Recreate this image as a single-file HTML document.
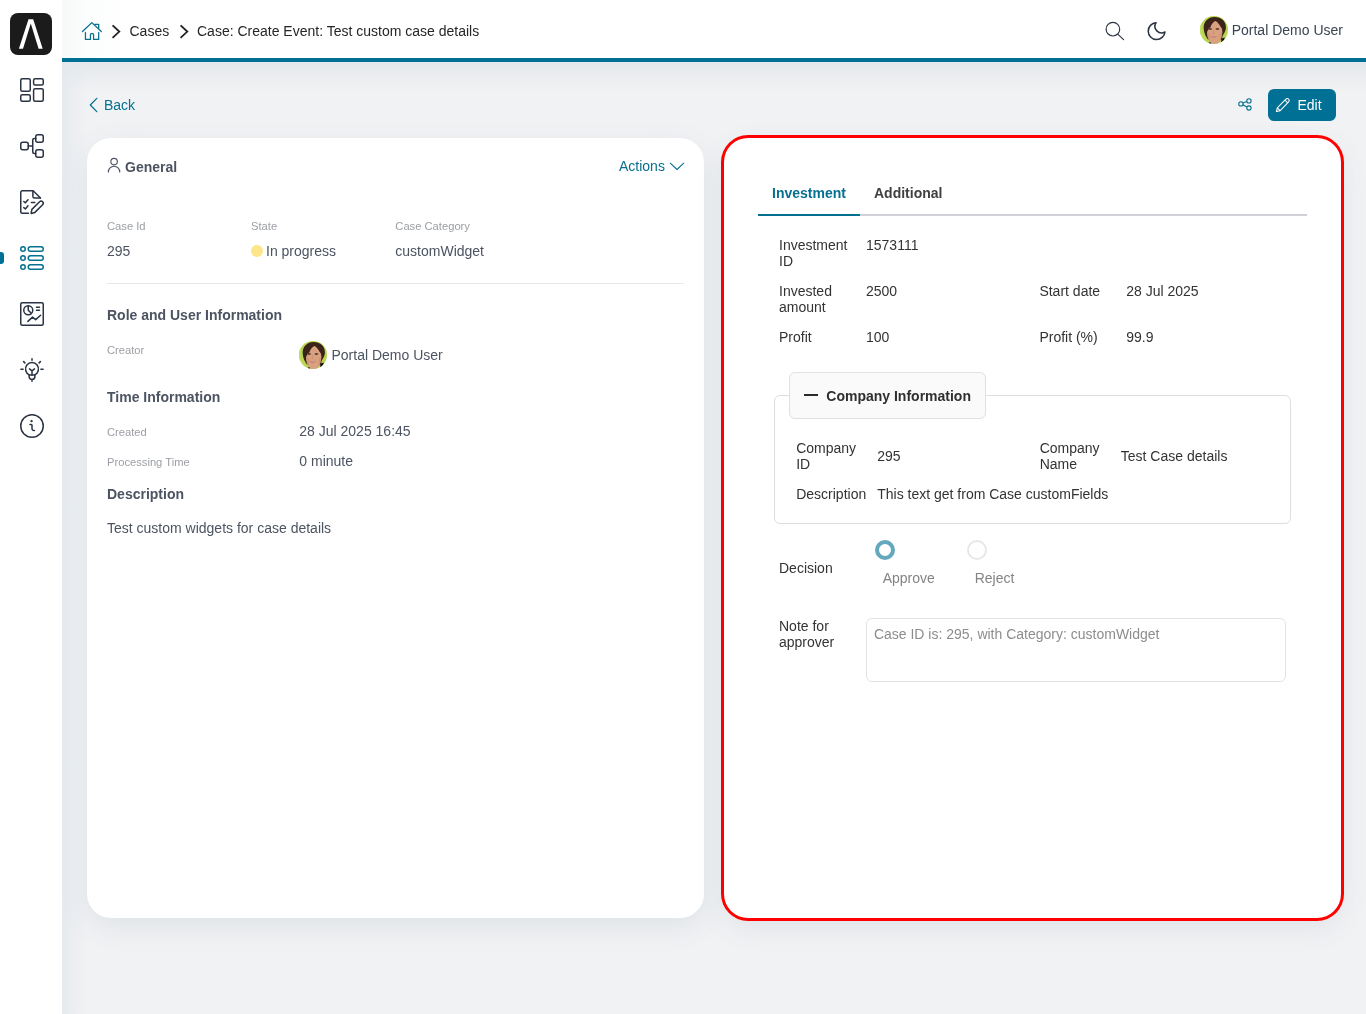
<!DOCTYPE html>
<html lang="en">
<head>
<meta charset="utf-8">
<title>Case: Create Event: Test custom case details</title>
<style>
*{box-sizing:border-box;margin:0;padding:0}
html,body{width:1366px;height:1014px;overflow:hidden}
body{font-family:"Liberation Sans",sans-serif;font-size:14px;color:#4c5361;background:#f1f2f4;position:relative}
.abs{position:absolute}
.t{position:absolute;white-space:nowrap;line-height:16px}
svg{display:block;overflow:visible}
/* layout */
#main{position:absolute;left:62px;top:62px;width:1304px;height:952px;background:#f1f2f4;overflow:hidden}
#sidebar{position:absolute;left:0;top:0;width:62px;height:1014px;background:#fff}
#topbar{position:absolute;left:62px;top:0;width:1304px;height:58px;background:linear-gradient(to right,#f7f8f8 0,#fcfdfd 26px,#fff 70px)}
#blueline{position:absolute;left:62px;top:58px;width:1304px;height:4px;background:#007095}
.card{position:absolute;background:#fff;border-radius:24px}
.lbl{font-size:11.2px;color:#9b9ea4}
.val{color:#4c5361}
.b{font-weight:700}
.blue{color:#05708f}
.dk{color:#333}
</style>
</head>
<body>
<div id="root" style="position:absolute;left:0;top:0;width:1366px;height:1014px;will-change:transform">
<div id="main">

  <div class="abs" style="left:0;top:0;width:1304px;height:30px;background:linear-gradient(to bottom,rgba(228,231,234,.95),rgba(228,231,234,0))"></div>
  <div class="abs" style="left:0;top:0;width:26px;height:952px;background:linear-gradient(to right,rgba(227,233,237,.92),rgba(229,234,238,.5) 10px,rgba(232,236,239,0))"></div>

  <div class="card" id="lcard" style="left:25px;top:76px;width:617px;height:780px;box-shadow:0 9px 30px rgba(58,92,115,.098)"></div>
  <div class="card" id="rcard" style="left:662px;top:76px;width:617px;height:780px;box-shadow:0 0 0 3px #f00,0 9px 30px rgba(58,92,115,.098)"></div>
</div>
<div id="sidebar">

  <div class="abs" style="left:10px;top:13px;width:42px;height:42px;border-radius:8px;background:#1b1b1b">
    <svg width="42" height="42" viewBox="0 0 42 42"><path d="M8.9 35.7L18.5 6.3h4.7L32.7 35.7h-4.1L20.8 10.6 13 35.7z" fill="#fff"/></svg>
  </div>
  <div class="abs" style="left:0;top:252px;width:4px;height:12px;background:#007095;border-radius:0 3px 3px 0"></div>
  <!-- dashboard -->
  <svg class="abs" style="left:20px;top:78px" width="24" height="24" viewBox="0 0 24 24" fill="none" stroke="#2a3342" stroke-width="1.5" stroke-linejoin="round">
    <rect x=".75" y=".75" width="9.5" height="12.4" rx="1.5"/><rect x="13.6" y=".75" width="9.65" height="6.3" rx="1.5"/>
    <rect x=".75" y="16.75" width="9.5" height="6.5" rx="1.5"/><rect x="13.6" y="10.75" width="9.65" height="12.5" rx="1.5"/>
  </svg>
  <!-- hierarchy -->
  <svg class="abs" style="left:20px;top:134px" width="24" height="24" viewBox="0 0 24 24" fill="none" stroke="#2a3342" stroke-width="1.5" stroke-linecap="round" stroke-linejoin="round">
    <rect x=".75" y="8.25" width="7.5" height="7.5" rx="2"/><rect x="15.75" y=".75" width="7.5" height="7.5" rx="2"/><rect x="15.75" y="15.75" width="7.5" height="7.5" rx="2"/>
    <path d="M8.25 12h4.5M15.75 4.5h-1.5a1.5 1.5 0 0 0-1.5 1.5v12a1.5 1.5 0 0 0 1.5 1.5h1.5"/>
  </svg>
  <!-- task list pen -->
  <svg class="abs" style="left:20px;top:190px" width="24" height="24" viewBox="0 0 24 24" fill="none" stroke="#2a3342" stroke-width="1.5" stroke-linecap="round" stroke-linejoin="round">
    <path d="M8.4 23.25H2.25a1.5 1.5 0 0 1-1.5-1.5V2.25a1.5 1.5 0 0 1 1.5-1.5h10.9l7.3 7.3"/>
    <path d="M12.9 .9v5.6a1.5 1.5 0 0 0 1.5 1.5h6"/>
    <path d="M3.8 11.5l1.6 1.3 2.6-3.1M3.8 17.6l1.6 1.3 2.6-3.1M11.4 12.5h3.4"/>
    <path d="M11.1 23.4l.8-4 7.7-7.7a2.1 2.1 0 0 1 3 3l-7.7 7.7z"/>
  </svg>
  <!-- list (active) -->
  <svg class="abs" style="left:20px;top:246px" width="24" height="24" viewBox="0 0 24 24" fill="none" stroke="#05708f" stroke-width="1.5">
    <circle cx="3" cy="3" r="2.25"/><circle cx="3" cy="12" r="2.25"/><circle cx="3" cy="21" r="2.25"/>
    <rect x="8.25" y=".75" width="15" height="4.5" rx="2.25"/><rect x="8.25" y="9.75" width="15" height="4.5" rx="2.25"/><rect x="8.25" y="18.75" width="15" height="4.5" rx="2.25"/>
  </svg>
  <!-- statistics -->
  <svg class="abs" style="left:20px;top:302px" width="24" height="24" viewBox="0 0 24 24" fill="none" stroke="#2a3342" stroke-width="1.5" stroke-linecap="round" stroke-linejoin="round">
    <rect x=".75" y=".75" width="22.5" height="22.5" rx="1.5"/>
    <circle cx="8.25" cy="8.2" r="4.5"/><path d="M8.25 3.75v4.4l3.1 3.2M16.5 5.25h3M16.5 8.25h3M7.9 19.4l4.6-4.3 3.2 2.5 4.9-4.3"/>
  </svg>
  <!-- bulb -->
  <svg class="abs" style="left:20px;top:358px" width="24" height="24" viewBox="0 0 24 24" fill="none" stroke="#2a3342" stroke-width="1.5" stroke-linecap="round" stroke-linejoin="round">
    <path d="M9.3 16.9A6.5 6.5 0 1 1 14.7 16.9"/><path d="M9.1 17h5.8M9.1 17v1.6a2.9 2.9 0 0 0 5.8 0V17M12 21.9v1.35"/>
    <path d="M12 .75v1.5M3.6 3.6l1.3 1.3M20.4 3.6l-1.3 1.3M.9 11.25h2.2M20.9 11.25h2.2M9.5 10.9l2.5 2 2.5-2M12 12.9V17"/>
  </svg>
  <!-- info -->
  <svg class="abs" style="left:20px;top:414px" width="24" height="24" viewBox="0 0 24 24" fill="none" stroke="#2a3342" stroke-width="1.5" stroke-linecap="round" stroke-linejoin="round">
    <circle cx="12" cy="12" r="11.25"/><path d="M14.4 16.5h-.75a1.65 1.65 0 0 1-1.65-1.65v-3.6a.75.75 0 0 0-.75-.75h-1.3"/><circle cx="11.4" cy="7.1" r=".7" fill="#2a3342" stroke-width="1"/>
  </svg>

</div>
<div id="topbar"></div>
<div id="blueline"></div>


<!-- home -->
<svg class="abs" style="left:82px;top:22px" width="20" height="18" viewBox="0 0 20 18" fill="none" stroke="#05708f" stroke-width="1.25" stroke-linecap="round" stroke-linejoin="round">
  <path d="M.5 9.5L9.8.6l9.5 8.9"/><path d="M12.7 2.3h4v3.9"/>
  <path d="M3.45 10.4v7h5v-4.8a1 1 0 0 1 1-1h1.1a1 1 0 0 1 1 1v4.8h5.15v-7"/>
</svg>
<svg class="abs" style="left:112px;top:25px" width="9" height="13" viewBox="0 0 9 13" fill="none" stroke="#222" stroke-width="1.8" stroke-linecap="square" stroke-linejoin="miter"><path d="M1.2 .9l6.1 5.7-6.1 5.7"/></svg>
<div class="t" style="left:129.5px;top:23px;color:#262626">Cases</div>
<svg class="abs" style="left:179.7px;top:25px" width="9" height="13" viewBox="0 0 9 13" fill="none" stroke="#222" stroke-width="1.8" stroke-linecap="square" stroke-linejoin="miter"><path d="M1.2 .9l6.1 5.7-6.1 5.7"/></svg>
<div class="t" style="left:197px;top:23px;color:#262626">Case: Create Event: Test custom case details</div>
<!-- search -->
<svg class="abs" style="left:1104px;top:20px" width="22" height="22" viewBox="0 0 22 22" fill="none" stroke="#2a3342" stroke-width="1.15" stroke-linecap="round"><circle cx="8.9" cy="9.2" r="6.8"/><path d="M13.7 14.2l5.9 5.4"/></svg>
<!-- moon -->
<svg class="abs" style="left:1147.5px;top:22px" width="18" height="18" viewBox="0 0 18 18" fill="none" stroke="#2a3342" stroke-width="1.5" stroke-linejoin="round"><path d="M8.1.7A8.4 8.4 0 1 0 17 9.9 6.55 6.55 0 0 1 8.1.7z"/></svg>
<div class="abs" style="left:1200px;top:16px;width:28px;height:28px;border-radius:50%;overflow:hidden"><svg width="28" height="28" viewBox="0 0 28 28" style="overflow:hidden">
        <rect width="28" height="28" fill="#b7d550"/>
        <path d="M2 7 Q0.5 16 5.5 25 L9 28 L0 28 L0 7 Z" fill="#c2dc62"/>
        <path d="M3.7 12.5 C3.2 6 8 1.1 14.5 1.1 C21.5 1.1 26.3 5.8 25.9 11.8 C25.7 15 24.2 17.5 22.8 19.5 L21.5 24 L8 23.5 C5.5 20.5 4 16.5 3.7 12.5 Z" fill="#3b2419"/>
        <path d="M7 15.5 C7 9 10.5 5 14.8 5 C19.3 5 22.3 9.5 22.3 15.5 C22.3 22 19.3 29 14.6 29 C10 29 7 22 7 15.5 Z" fill="#d9a17f"/>
        <path d="M7 15.5 C7 19 8 23 10 26 L10 18 Z" fill="#cc9170" opacity=".7"/>
        <path d="M22.3 15.5 C22.3 19 21.3 23 19.5 26 L19.8 18 Z" fill="#cc9170" opacity=".7"/>
        <path d="M15.9 4.6 C12.6 6.4 11 9 10.5 11.3 C9.2 12 8 13.6 7.3 15.8 L4.5 14 L5.5 6 L12 2.5 Z" fill="#3b2419"/>
        <path d="M15.1 4.6 C17.6 6.2 19.6 8.8 20.4 10.5 C21.3 11.3 22 12.5 22.5 14.2 L25.5 13 L23.5 5 L17 2.5 Z" fill="#3b2419"/>
        <ellipse cx="10.1" cy="13" rx="1.9" ry="1" fill="#5e4436"/>
        <ellipse cx="17.4" cy="13" rx="1.9" ry="1" fill="#5e4436"/>
        <path d="M13.6 14 L13.1 17.6 L14.6 17.9" fill="none" stroke="#c58c6c" stroke-width=".7"/>
        <path d="M10.8 20.4 Q13.5 23.6 16.4 20.4 Q13.5 21.2 10.8 20.4 Z" fill="#d9a3a0" stroke="#c77c74" stroke-width=".7"/>
        <path d="M21.6 22.6 L24.8 21.6 L24 25 L21 27 Z" fill="#101010"/>
        <path d="M8.8 26.6 L10.6 26 L11 28 L8.5 28 Z" fill="#2a2f45"/>
</svg></div>
<div class="t" style="left:1231.7px;top:22px;color:#3b4453">Portal Demo User</div>


<svg class="abs" style="left:89px;top:97px" width="9" height="16" viewBox="0 0 9 16" fill="none" stroke="#05708f" stroke-width="1.2" stroke-linecap="round" stroke-linejoin="round"><path d="M7.8 1.3L1.3 8l6.5 6.7"/></svg>
<div class="t blue" style="left:104px;top:97px">Back</div>
<!-- share -->
<svg class="abs" style="left:1238px;top:98.3px" width="15" height="14" viewBox="0 0 15 14" fill="none" stroke="#05708f" stroke-width="1.1"><circle cx="2.9" cy="5.9" r="2.15"/><circle cx="10.95" cy="2.9" r="2.15"/><circle cx="10.95" cy="10" r="2.15"/><path d="M4.9 5.1l4-1.5M4.9 6.8l4 2.3"/></svg>
<div class="abs" style="left:1268px;top:89px;width:68px;height:32px;border-radius:6px;background:#007095"></div>
<svg class="abs" style="left:1276px;top:98px" width="14" height="14" viewBox="0 0 14 14" fill="none" stroke="#fff" stroke-width="1.05" stroke-linecap="round" stroke-linejoin="round"><path d="M.4 13.6l.9-3.8L9.9 1.2a1.9 1.9 0 0 1 2.7 2.7L4.2 12.7zM1.3 9.8l2.9 2.9M9 2.1l2.7 2.7"/></svg>
<div class="t" style="left:1297.5px;top:97px;color:#fff">Edit</div>


<svg class="abs" style="left:107px;top:157px" width="14" height="16" viewBox="0 0 14 16" fill="none" stroke="#4c5361" stroke-width="1.15" stroke-linecap="round"><circle cx="7.1" cy="4.6" r="3.25"/><path d="M1.35 14.9a5.7 5.7 0 0 1 11.4 0"/></svg>
<div class="t b val" style="left:125px;top:159px">General</div>
<div class="t blue" style="left:619px;top:158px">Actions</div>
<svg class="abs" style="left:669px;top:162px" width="16" height="9" viewBox="0 0 16 9" fill="none" stroke="#05708f" stroke-width="1.05" stroke-linecap="round" stroke-linejoin="round"><path d="M1.3 1.2L8 7.5l6.7-6.3"/></svg>
<div class="t lbl" style="left:107px;top:218px">Case Id</div>
<div class="t lbl" style="left:251px;top:218px">State</div>
<div class="t lbl" style="left:395.3px;top:218px">Case Category</div>
<div class="t val" style="left:107px;top:243px">295</div>
<div class="abs" style="left:251px;top:245px;width:12px;height:12px;border-radius:50%;background:#fde58a"></div>
<div class="t val" style="left:266px;top:243px">In progress</div>
<div class="t val" style="left:395.3px;top:243px">customWidget</div>
<div class="abs" style="left:107px;top:283px;width:577px;height:1px;background:#e8e9eb"></div>
<div class="t b val" style="left:107px;top:307px">Role and User Information</div>
<div class="t lbl" style="left:107px;top:342px">Creator</div>
<div class="abs" style="left:299px;top:341px;width:28px;height:28px;border-radius:50%;overflow:hidden"><svg width="28" height="28" viewBox="0 0 28 28" style="overflow:hidden">
        <rect width="28" height="28" fill="#b7d550"/>
        <path d="M2 7 Q0.5 16 5.5 25 L9 28 L0 28 L0 7 Z" fill="#c2dc62"/>
        <path d="M3.7 12.5 C3.2 6 8 1.1 14.5 1.1 C21.5 1.1 26.3 5.8 25.9 11.8 C25.7 15 24.2 17.5 22.8 19.5 L21.5 24 L8 23.5 C5.5 20.5 4 16.5 3.7 12.5 Z" fill="#3b2419"/>
        <path d="M7 15.5 C7 9 10.5 5 14.8 5 C19.3 5 22.3 9.5 22.3 15.5 C22.3 22 19.3 29 14.6 29 C10 29 7 22 7 15.5 Z" fill="#d9a17f"/>
        <path d="M7 15.5 C7 19 8 23 10 26 L10 18 Z" fill="#cc9170" opacity=".7"/>
        <path d="M22.3 15.5 C22.3 19 21.3 23 19.5 26 L19.8 18 Z" fill="#cc9170" opacity=".7"/>
        <path d="M15.9 4.6 C12.6 6.4 11 9 10.5 11.3 C9.2 12 8 13.6 7.3 15.8 L4.5 14 L5.5 6 L12 2.5 Z" fill="#3b2419"/>
        <path d="M15.1 4.6 C17.6 6.2 19.6 8.8 20.4 10.5 C21.3 11.3 22 12.5 22.5 14.2 L25.5 13 L23.5 5 L17 2.5 Z" fill="#3b2419"/>
        <ellipse cx="10.1" cy="13" rx="1.9" ry="1" fill="#5e4436"/>
        <ellipse cx="17.4" cy="13" rx="1.9" ry="1" fill="#5e4436"/>
        <path d="M13.6 14 L13.1 17.6 L14.6 17.9" fill="none" stroke="#c58c6c" stroke-width=".7"/>
        <path d="M10.8 20.4 Q13.5 23.6 16.4 20.4 Q13.5 21.2 10.8 20.4 Z" fill="#d9a3a0" stroke="#c77c74" stroke-width=".7"/>
        <path d="M21.6 22.6 L24.8 21.6 L24 25 L21 27 Z" fill="#101010"/>
        <path d="M8.8 26.6 L10.6 26 L11 28 L8.5 28 Z" fill="#2a2f45"/>
</svg></div>
<div class="t val" style="left:331.5px;top:347px">Portal Demo User</div>
<div class="t b val" style="left:107px;top:389px">Time Information</div>
<div class="t lbl" style="left:107px;top:424px">Created</div>
<div class="t val" style="left:299.3px;top:423px">28 Jul 2025 16:45</div>
<div class="t lbl" style="left:107px;top:454px">Processing Time</div>
<div class="t val" style="left:299.3px;top:453px">0 minute</div>
<div class="t b val" style="left:107px;top:486px">Description</div>
<div class="t val" style="left:107px;top:520px">Test custom widgets for case details</div>


<div class="t b blue" style="left:772px;top:185px">Investment</div>
<div class="t b" style="left:874px;top:185px;color:#404040">Additional</div>
<div class="abs" style="left:758px;top:214px;width:549px;height:2px;background:#d0d2d7"></div>
<div class="abs" style="left:758px;top:214px;width:102px;height:2px;background:#05708f"></div>
<div class="t dk" style="left:779px;top:237px">Investment<br>ID</div>
<div class="t dk" style="left:866px;top:237px">1573111</div>
<div class="t dk" style="left:779px;top:283px">Invested<br>amount</div>
<div class="t dk" style="left:866px;top:283px">2500</div>
<div class="t dk" style="left:1039.4px;top:283px">Start date</div>
<div class="t dk" style="left:1126.2px;top:283px">28 Jul 2025</div>
<div class="t dk" style="left:779px;top:329px">Profit</div>
<div class="t dk" style="left:866px;top:329px">100</div>
<div class="t dk" style="left:1039.4px;top:329px">Profit (%)</div>
<div class="t dk" style="left:1126.2px;top:329px">99.9</div>
<!-- fieldset -->
<div class="abs" style="left:774px;top:395px;width:517px;height:129px;border:1px solid #dcdee2;border-radius:6px"></div>
<div class="abs" style="left:789px;top:372px;width:197px;height:47px;border:1px solid #dfe1e5;border-radius:6px;background:#fafafa"></div>
<div class="abs" style="left:804px;top:394.25px;width:14px;height:1.3px;background:#2b2b2b"></div>
<div class="t b" style="left:826.3px;top:388px;color:#2f2f2f">Company Information</div>
<div class="t dk" style="left:796.2px;top:440px">Company<br>ID</div>
<div class="t dk" style="left:877.2px;top:448px">295</div>
<div class="t dk" style="left:1039.7px;top:440px">Company<br>Name</div>
<div class="t dk" style="left:1120.8px;top:448px">Test Case details</div>
<div class="t dk" style="left:796.2px;top:486px">Description</div>
<div class="t dk" style="left:877.2px;top:486px">This text get from Case customFields</div>
<!-- decision -->
<div class="t dk" style="left:779px;top:560px">Decision</div>
<div class="abs" style="left:875px;top:540px;width:20px;height:20px;border-radius:50%;border:4px solid #64a8be;background:#fff"></div>
<div class="t" style="left:882.7px;top:570px;color:#848484">Approve</div>
<div class="abs" style="left:967px;top:540px;width:20px;height:20px;border-radius:50%;border:2px solid #e5e7e9;background:#fff"></div>
<div class="t" style="left:974.7px;top:570px;color:#848484">Reject</div>
<div class="t dk" style="left:779px;top:618px">Note for<br>approver</div>
<div class="abs" style="left:866px;top:618px;width:420px;height:64px;border:1px solid #e1e3e6;border-radius:6px;background:#fff"></div>
<div class="t" style="left:873.9px;top:626px;color:#8d8d8d">Case ID is: 295, with Category: customWidget</div>

</div>
</body>
</html>
